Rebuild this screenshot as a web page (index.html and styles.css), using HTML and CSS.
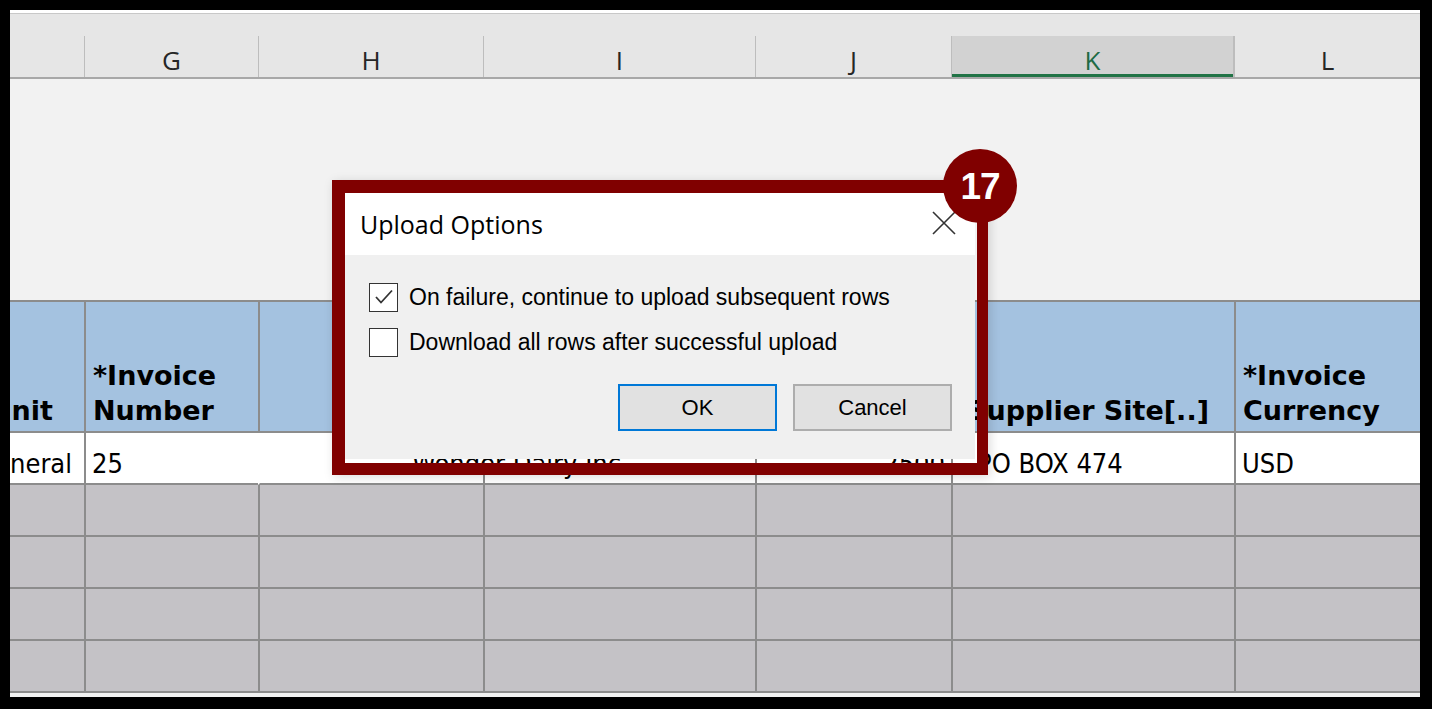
FILE: index.html
```html
<!DOCTYPE html>
<html>
<head>
<meta charset="utf-8">
<link rel="stylesheet" href="styles.css">
</head>
<body>
<div class="screen">
  <div class="sheet">
    <div class="topline"></div>
    <div class="colbar">
      <div class="colhead first"></div>
      <div class="colhead">G</div>
      <div class="colhead">H</div>
      <div class="colhead">I</div>
      <div class="colhead">J</div>
      <div class="colhead sel">K</div>
      <div class="colhead">L</div>
    </div>
    <div class="blank"></div>
    <div class="row hdr">
      <div class="cell clip"><span>Unit</span></div>
      <div class="cell">*Invoice<br>Number</div>
      <div class="cell"></div>
      <div class="cell"></div>
      <div class="cell"></div>
      <div class="cell site">Supplier Site[..]</div>
      <div class="cell">*Invoice<br>Currency</div>
    </div>
    <div class="row data">
      <div class="cell clip"><span>General</span></div>
      <div class="cell">25</div>
      <div class="cell nol"><span class="spill">Wonder Dairy Inc</span></div>
      <div class="cell"></div>
      <div class="cell right">2500</div>
      <div class="cell addr">PO BOX 474</div>
      <div class="cell">USD</div>
    </div>
    <div class="row empty"><div class="cell"></div><div class="cell"></div><div class="cell"></div><div class="cell"></div><div class="cell"></div><div class="cell"></div><div class="cell"></div></div>
    <div class="row empty"><div class="cell"></div><div class="cell"></div><div class="cell"></div><div class="cell"></div><div class="cell"></div><div class="cell"></div><div class="cell"></div></div>
    <div class="row empty"><div class="cell"></div><div class="cell"></div><div class="cell"></div><div class="cell"></div><div class="cell"></div><div class="cell"></div><div class="cell"></div></div>
    <div class="row empty"><div class="cell"></div><div class="cell"></div><div class="cell"></div><div class="cell"></div><div class="cell"></div><div class="cell"></div><div class="cell"></div></div>
    <div class="bottomstrip"></div>
  </div>

  <div class="callout">
    <div class="dialog">
      <div class="titlebar">
        <span class="title">Upload Options</span>
        <svg class="close" width="24" height="24" viewBox="0 0 24 24"><path d="M1 1 L23 23 M23 1 L1 23" stroke="#333" stroke-width="1.6" fill="none"/></svg>
      </div>
      <div class="body">
        <label class="opt">
          <span class="box"><svg width="26" height="26" viewBox="0 0 26 26"><polyline points="5,13 10,18.5 21,6.5" fill="none" stroke="#333" stroke-width="1.8"/></svg></span>
          <span>On failure, continue to upload subsequent rows</span>
        </label>
        <label class="opt">
          <span class="box"></span>
          <span>Download all rows after successful upload</span>
        </label>
        <div class="buttons">
          <button class="btn default">OK</button>
          <button class="btn">Cancel</button>
        </div>
      </div>
    </div>
  </div>
  <div class="badge">17</div>
</div>
</body>
</html>
```

FILE: styles.css
```css
* { box-sizing: border-box; }
html, body { margin: 0; padding: 0; background: #000; }
.screen {
  position: relative;
  width: 1432px;
  height: 709px;
  background: #000;
  padding: 10px 12px 12px 10px;
  overflow: hidden;
}
.sheet {
  width: 1410px;
  height: 687px;
  background: #f2f2f2;
  display: flex;
  flex-direction: column;
}
.topline {
  height: 4px;
  background: #fff;
  border-bottom: 1px solid #c8c8c8;
  flex: none;
}
.colbar {
  height: 65px;
  flex: none;
  background: #e6e6e6;
  border-bottom: 2px solid #a8a8a8;
  display: grid;
  grid-template-columns: 74px 174px 225px 272px 196px 283px 186px;
  align-items: end;
}
.colhead {
  height: 41px;
  border-left: 1px solid #bdbdbd;
  font-family: "Open Sans", "DejaVu Sans", sans-serif;
  font-size: 26px;
  line-height: 41px;
  padding-top: 4px;
  color: #262626;
  text-align: center;
}
.colhead.first { border-left: none; }
.colhead.sel {
  background: #d2d2d2;
  border-right: 1px solid #bdbdbd;
  box-shadow: inset 0 -3px 0 #217346;
  color: #1f6b45;
}
.blank { height: 221px; flex: none; }
.row {
  display: grid;
  grid-template-columns: 74px 174px 225px 272px 196px 283px 186px;
  flex: none;
}
.cell {
  border-left: 2px solid #8c8c8c;
  border-bottom: 2px solid #8c8c8c;
  min-width: 0;
}
.cell:first-child { border-left: none; }
.hdr {
  height: 133px;
  background: #a4c2e0;
  border-top: 2px solid #8c8c8c;
}
.hdr .cell {
  display: flex;
  align-items: flex-end;
  padding: 0 0 3px 7px;
  font-family: "DejaVu Sans", Verdana, sans-serif;
  font-weight: bold;
  font-size: 27px;
  line-height: 35px;
  color: #000;
  white-space: nowrap;
}
.hdr .cell.site { padding-left: 14px; }
.data {
  height: 52px;
  background: #fff;
}
.data .cell {
  display: flex;
  align-items: flex-end;
  padding: 0 0 2px 6px;
  font-family: "DejaVu Sans Condensed", "DejaVu Sans", sans-serif;
  font-size: 27px;
  line-height: 34px;
  color: #000;
  white-space: nowrap;
}
.data .cell.addr { padding-left: 24px; }
.row .cell.clip {
  overflow: hidden;
  justify-content: flex-end;
  padding-left: 0;
}
.hdr .cell.clip { padding-right: 31px; }
.data .cell.clip { padding-right: 12px; }
.data .cell.nol { border-left-color: transparent; padding-left: 152px; }
.data .cell.right { justify-content: flex-end; padding-right: 6px; }
.spill { position: relative; z-index: 0; }
.empty {
  height: 52px;
  background: #c4c2c6;
}
.bottomstrip { height: 4px; background: #f2f2f2; flex: none; }

/* Annotation frame + dialog */
.callout {
  position: absolute;
  left: 332px;
  top: 180px;
  width: 656px;
  height: 295px;
  border: 13px solid #800000;
  border-right-width: 11px;
  border-bottom-width: 12px;
  box-shadow: 2px 2px 10px rgba(0,0,0,0.15);
}
.dialog {
  width: 630px;
  height: 266px;
  background: #f0f0f0;
  display: flex;
  flex-direction: column;
}
.titlebar {
  height: 62px;
  background: #fff;
  display: flex;
  align-items: center;
  justify-content: space-between;
  padding: 0 19px 0 15px;
  flex: none;
}
.title {
  font-family: "Open Sans", "Noto Sans", sans-serif;
  font-size: 25px;
  color: #000;
  padding-top: 0;
}
.close { display: block; margin-top: -2px; }
.body {
  flex: 1;
  padding: 28px 23px 28px 24px;
  display: flex;
  flex-direction: column;
  font-family: "Liberation Sans", Arial, sans-serif;
  font-size: 23px;
  color: #000;
}
.opt {
  display: flex;
  align-items: center;
  gap: 11px;
  height: 28px;
  margin-bottom: 17px;
}
.box {
  width: 29px;
  height: 29px;
  border: 1.5px solid #333;
  background: #fff;
  display: flex;
  align-items: center;
  justify-content: center;
  flex: none;
}
.box svg { display: block; }
.buttons {
  margin-top: auto;
  display: flex;
  justify-content: flex-end;
  gap: 16px;
}
.btn {
  width: 159px;
  height: 47px;
  background: #e1e1e1;
  border: 2px solid #adadad;
  font-family: "Liberation Sans", Arial, sans-serif;
  font-size: 22px;
  color: #000;
  padding: 0;
  margin: 0;
}
.btn.default { border-color: #0078d7; }

.badge {
  position: absolute;
  left: 943px;
  top: 149px;
  width: 74px;
  height: 74px;
  border-radius: 50%;
  background: #800000;
  color: #fff;
  font-family: "Liberation Sans", Arial, sans-serif;
  font-weight: bold;
  font-size: 37px;
  line-height: 76px;
  text-align: center;
  letter-spacing: -1px;
}
```
